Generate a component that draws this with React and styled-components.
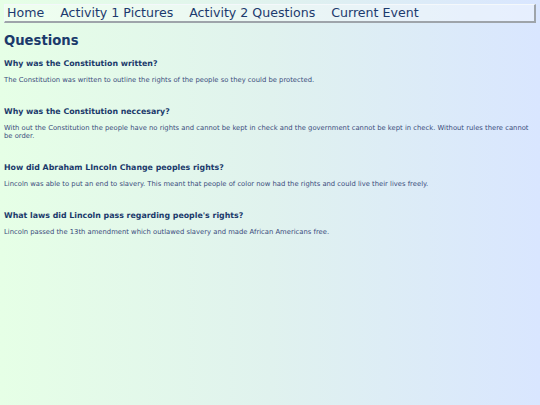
import React from 'react';
import styled, { createGlobalStyle } from 'styled-components';

// - Global page styles -
const GlobalStyle = createGlobalStyle`
  html, body {
    margin: 0;
    padding: 0;
  }
  body {
    min-height: 405px;
    background: linear-gradient(to right, #e6ffe6 0%, #e0f2ee 50%, #d9e6ff 100%);
    font-family: "DejaVu Sans", Verdana, sans-serif;
    color: #1c3a6e;
  }
`;

const Page = styled.div`
  padding: 4px 4px 0 4px;
`;

// Top navigation bar with an outset border.
const NavBar = styled.nav`
  display: flex;
  gap: 16px;
  align-items: center;
  height: 14px;
  padding: 1px 2px;
  background: rgba(255, 255, 255, 0.35);
  border-top: 1px solid #f4f8fb;
  border-left: 1px solid #f4f8fb;
  border-right: 2px solid #9ea4aa;
  border-bottom: 2px solid #9ea4aa;
`;

const NavLink = styled.a`
  font-size: 12.6px;
  color: #1c3a6e;
  text-decoration: none;
  white-space: nowrap;
  line-height: 14px;
`;

const Title = styled.h1`
  margin: 10px 0 0 0;
  font-size: 13.2px;
  line-height: 16px;
  font-weight: bold;
  color: #1b3a6b;
`;

const Section = styled.section`
  margin-top: ${props => props.first ? '10px' : '23px'};
`;

const Question = styled.h3`
  margin: 0;
  font-size: 7.85px;
  line-height: 10px;
  font-weight: bold;
  color: #1b3a6b;
`;

const Answer = styled.p`
  margin: 7px 0 0 0;
  font-size: 6.8px;
  line-height: 8px;
  color: #3a4c7c;
`;

const links = ['Home', 'Activity 1 Pictures', 'Activity 2 Questions', 'Current Event'];

const qa = [
  {
    q: 'Why was the Constitution written?',
    a: 'The Constitution was written to outline the rights of the people so they could be protected.',
  },
  {
    q: 'Why was the Constitution neccesary?',
    a: 'With out the Constitution the people have no rights and cannot be kept in check and the government cannot be kept in check. Without rules there cannot be order.',
  },
  {
    q: 'How did Abraham LIncoln Change peoples rights?',
    a: 'Lincoln was able to put an end to slavery. This meant that people of color now had the rights and could live their lives freely.',
  },
  {
    q: "What laws did Lincoln pass regarding people's rights?",
    a: 'Lincoln passed the 13th amendment which outlawed slavery and made African Americans free.',
  },
];

const App = () => (
  <>
    <GlobalStyle />
    <Page>
      <NavBar>
        {links.map(l => (
          <NavLink key={l} href="#">{l}</NavLink>
        ))}
      </NavBar>
      <Title>Questions</Title>
      {qa.map((item, i) => (
        <Section key={item.q} first={i === 0}>
          <Question>{item.q}</Question>
          <Answer>{item.a}</Answer>
        </Section>
      ))}
    </Page>
  </>
);

export default App;
